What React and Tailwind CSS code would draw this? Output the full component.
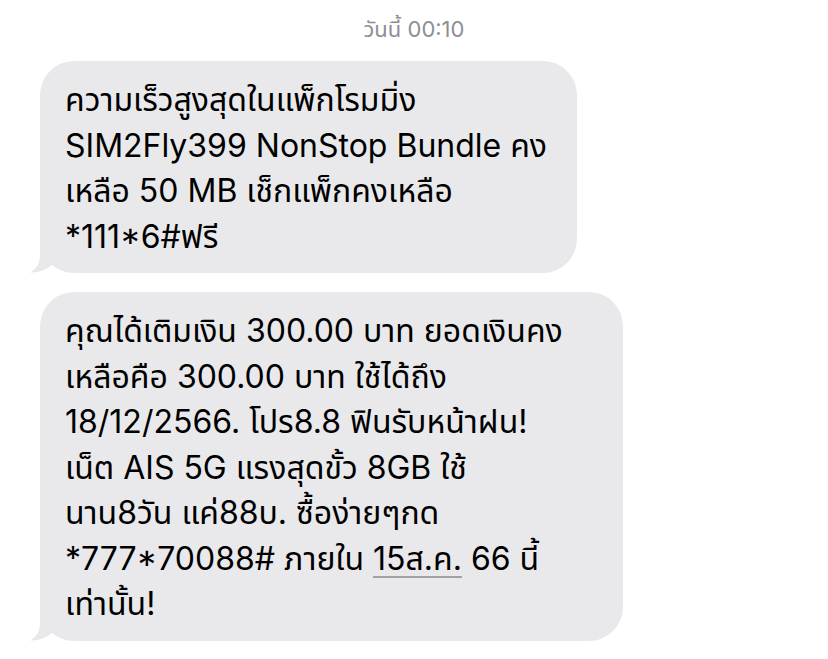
import React from 'react';

const bubbles = [
  {
    width: 'w-[537px]',
    lines: [
      'ความเร็วสูงสุดในแพ็กโรมมิ่ง',
      'SIM2Fly399 NonStop Bundle คง',
      'เหลือ 50 MB เช็กแพ็กคงเหลือ',
      '*111*6#ฟรี',
    ],
  },
  {
    width: 'w-[583px]',
    lines: [
      'คุณได้เติมเงิน 300.00 บาท ยอดเงินคง',
      'เหลือคือ 300.00 บาท ใช้ได้ถึง',
      '18/12/2566. โปร8.8 ฟินรับหน้าฝน!',
      'เน็ต AIS 5G แรงสุดขั้ว 8GB ใช้',
      'นาน8วัน แค่88บ. ซื้อง่ายๆกด',
      <>
        *777*70088# ภายใน{' '}
        <span className="underline decoration-[#a0a0a6] decoration-[1.5px] underline-offset-[6px]">15ส.ค.</span> 66 นี้
      </>,
      'เท่านั้น!',
    ],
  },
];

function Tail() {
  return (
    <svg
      className="absolute left-[-10px] bottom-0"
      width="32"
      height="40"
      viewBox="0 0 32 40"
    >
      <path d="M10 2 L10 22 C10 31 6 36 0 39.5 C9 39.5 16 37 22 32 L30 8 Z" fill="#e9e9eb" />
    </svg>
  );
}

function Bubble({ width, lines }) {
  return (
    <div className={`relative ${width}`}>
      <Tail />
      <div className="relative rounded-[34px] bg-[#e9e9eb] pl-[25px] pr-5 pt-[16px] pb-[14px] text-[32px] leading-[45.5px] text-black">
        {lines.map((l, i) => (
          <div key={i} className="whitespace-nowrap">
            {l}
          </div>
        ))}
      </div>
    </div>
  );
}

export default function App() {
  return (
    <div
      className="min-h-[659px] w-[828px] bg-white"
      style={{ fontFamily: 'Inter, "Noto Sans", "Noto Sans Thai", sans-serif' }}
    >
      <div className="pt-[16px] text-center text-[22px] leading-[27px] text-[#8e8e93]">
        วันนี้ 00:10
      </div>
      <div className="flex flex-col gap-[19px] pl-10 pt-[18px]">
        {bubbles.map((b, i) => (
          <Bubble key={i} {...b} />
        ))}
      </div>
    </div>
  );
}
